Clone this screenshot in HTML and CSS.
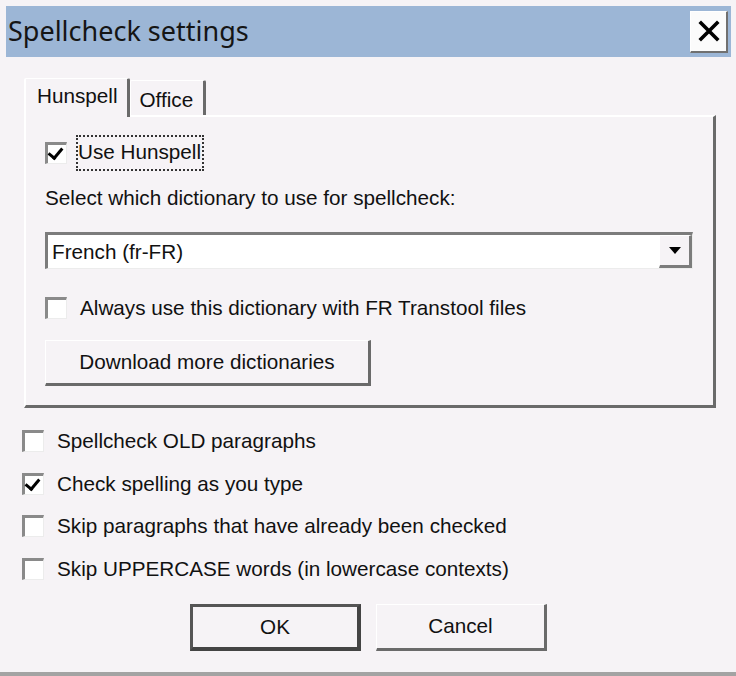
FILE: index.html
```html
<html>
<head>
    <link rel="stylesheet" href="styles.css">
</head>
<body>
    <div class="dialog">
        <div class="titlebar">
            <span class="titlebar__text">Spellcheck settings</span>
            <div class="titlebar__close">
                <svg width="22" height="22" viewBox="0 0 22 22"><path d="M3 3 L19 19 M19 3 L3 19" stroke="#000" stroke-width="3.6" stroke-linecap="square"/></svg>
            </div>
        </div>
        <div class="content">
            <div class="tabs">
                <div class="tab tab--active">Hunspell</div>
                <div class="tab">Office</div>
            </div>
            <div class="panel">
                <div class="row row--first">
                    <span class="check check--on"></span>
                    <span class="focus">Use Hunspell</span>
                </div>
                <div class="label">Select which dictionary to use for spellcheck:</div>
                <div class="combo">
                    <span class="combo__value">French (fr-FR)</span>
                    <span class="combo__arrow"><svg width="12" height="7" viewBox="0 0 12 7"><path d="M0 0 H12 L6 7 Z" fill="#000"/></svg></span>
                </div>
                <div class="row row--always">
                    <span class="check"></span>
                    <span>Always use this dictionary with FR Transtool files</span>
                </div>
                <div class="btn btn--download">Download more dictionaries</div>
            </div>
            <ul class="options">
                <li class="row"><span class="check"></span><span>Spellcheck OLD paragraphs</span></li>
                <li class="row"><span class="check check--on"></span><span>Check spelling as you type</span></li>
                <li class="row"><span class="check"></span><span>Skip paragraphs that have already been checked</span></li>
                <li class="row"><span class="check"></span><span>Skip UPPERCASE words (in lowercase contexts)</span></li>
            </ul>
            <div class="actions">
                <div class="btn btn--default">OK</div>
                <div class="btn">Cancel</div>
            </div>
        </div>
    </div>
</body>
</html>
```

FILE: styles.css
```css
body {
    margin: 0;
    background: #f6f3f6;
    font-family: "Liberation Sans", Arial, sans-serif;
    font-size: 20.7px;
    color: #111;
}

ul, li {
    list-style-type: none;
    margin: 0;
    padding: 0;
}

.dialog {
    box-sizing: border-box;
    width: 736px;
    height: 676px;
    padding: 6px 5px 0 6px;
    border-bottom: 4px solid #a3a3a3;
    background: #f6f3f6;
}

.titlebar {
    height: 51px;
    background: #9cb6d6;
    display: flex;
    align-items: center;
    justify-content: space-between;
    padding: 0 3px 0 2px;
}

.titlebar__text {
    font-family: "Noto Sans", "Open Sans", sans-serif;
    font-size: 27px;
    color: #151515;
    margin-top: -2px;
}

.titlebar__close {
    box-sizing: border-box;
    width: 38px;
    height: 42px;
    background: #fbfbfb;
    border: 1px solid #fff;
    border-right: 2px solid #707070;
    border-bottom: 2px solid #707070;
    display: flex;
    align-items: center;
    justify-content: center;
}

.content {
    padding: 21px 15px 0 18px;
}

.tabs {
    display: flex;
    align-items: flex-end;
    height: 37px;
    position: relative;
    z-index: 1;
}

.tab {
    box-sizing: border-box;
    height: 35px;
    padding: 4px 10px 0 9px;
    display: flex;
    align-items: center;
    border-top: 1px solid #fff;
    border-left: 1px solid #fff;
    border-right: 3px solid #6a6a6a;
    border-radius: 2px 2px 0 0;
}

.tab--active {
    height: 39px;
    margin-bottom: -2px;
    padding: 0 9px 4px 11px;
    background: #f6f3f6;
    border-left: 2px solid #fff;
}

.panel {
    box-sizing: border-box;
    height: 293px;
    border-top: 2px solid #fff;
    border-left: 2px solid #fff;
    border-right: 3px solid #6a6a6a;
    border-bottom: 3px solid #6a6a6a;
    padding: 22px 21px 0 19px;
}

.row {
    display: flex;
    align-items: center;
    height: 28px;
}

.check {
    box-sizing: border-box;
    flex: none;
    width: 22px;
    height: 22px;
    margin-right: 13px;
    background: #fff;
    border-top: 3px solid #8a8a8a;
    border-left: 3px solid #8a8a8a;
    border-right: 1px solid #ececec;
    border-bottom: 1px solid #ececec;
    position: relative;
}

.check--on::after {
    content: "";
    position: absolute;
    left: 3px;
    top: 0px;
    width: 6px;
    height: 11px;
    border-right: 3px solid #000;
    border-bottom: 3px solid #000;
    transform: rotate(40deg);
}

.focus {
    outline: 2px dotted #333;
    outline-offset: 0;
    padding: 3px 1px 5px 0;
    margin-left: -2px;
}

.label {
    margin-top: 17px;
    height: 28px;
    line-height: 28px;
}

.combo {
    box-sizing: border-box;
    margin-top: 20px;
    width: 648px;
    height: 37px;
    background: #fff;
    border-top: 3px solid #7c7c7c;
    border-left: 3px solid #7c7c7c;
    border-right: 1px solid #ececec;
    border-bottom: 1px solid #ececec;
    display: flex;
    align-items: center;
    justify-content: space-between;
    padding-left: 4px;
}

.combo__arrow {
    box-sizing: border-box;
    width: 33px;
    height: 33px;
    background: #f6f3f6;
    border-right: 3px solid #7c7c7c;
    border-bottom: 3px solid #7c7c7c;
    border-top: 1px solid #fff;
    border-left: 1px solid #fff;
    display: flex;
    align-items: center;
    justify-content: center;
}

.row--always {
    margin-top: 25px;
}

.btn {
    box-sizing: border-box;
    height: 47px;
    width: 171px;
    display: flex;
    align-items: center;
    justify-content: center;
    background: #f6f3f6;
    border-top: 1px solid #fff;
    border-left: 1px solid #fff;
    border-right: 3px solid #6a6a6a;
    border-bottom: 3px solid #6a6a6a;
}

.btn--download {
    margin-top: 18px;
    width: 326px;
    height: 46px;
}

.btn--default {
    border: 3px solid #555;
    border-right: 4px solid #444;
    border-bottom: 4px solid #444;
}

.options {
    padding: 19px 0 0 0;
    margin-left: -2px;
    display: flex;
    flex-direction: column;
    gap: 14.5px;
}

.actions {
    display: flex;
    justify-content: center;
    gap: 15px;
    margin-top: 21px;
    margin-left: -18px;
    margin-right: -15px;
}
```
